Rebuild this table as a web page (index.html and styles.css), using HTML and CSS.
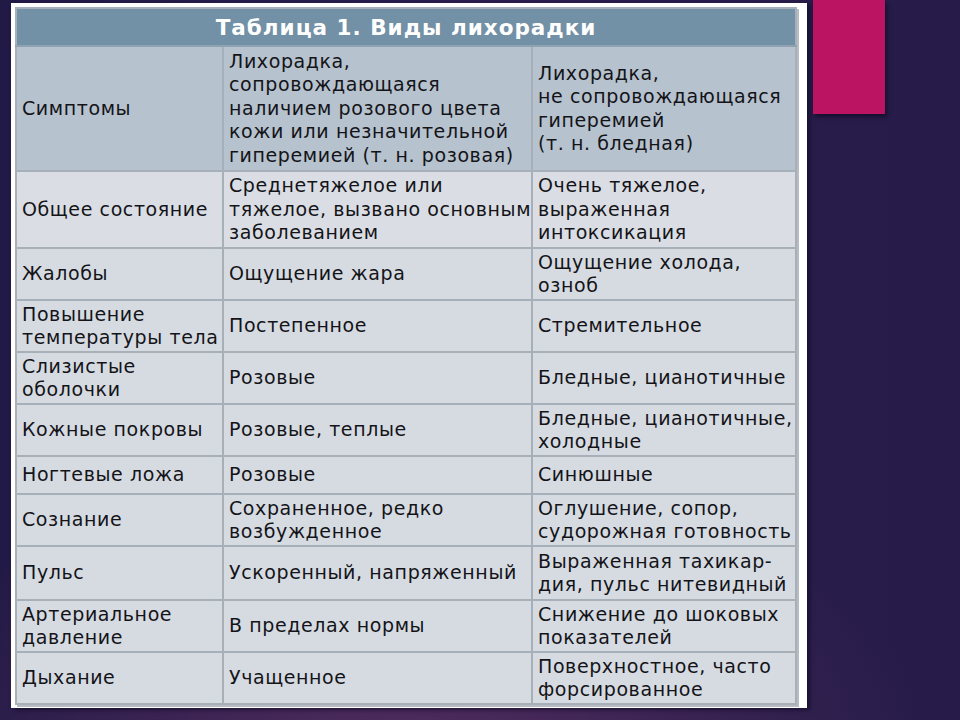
FILE: index.html
```html
<!DOCTYPE html>
<html lang="ru">
<head>
<meta charset="utf-8">
<title>Виды лихорадки</title>
<link rel="stylesheet" href="styles.css">
</head>
<body>
<div class="slide">
  <div class="accent"></div>
  <div class="frame">
    <table class="fever">
      <colgroup>
        <col class="c1"><col class="c2"><col class="c3">
      </colgroup>
      <thead>
        <tr class="title-row"><th colspan="3">Таблица 1. Виды лихорадки</th></tr>
      </thead>
      <tbody>
        <tr class="head r-head">
          <td>Симптомы</td>
          <td>Лихорадка,<br>сопровождающаяся<br>наличием розового цвета<br>кожи или незначительной<br>гиперемией (т. н. розовая)</td>
          <td>Лихорадка,<br>не сопровождающаяся<br>гиперемией<br>(т. н. бледная)</td>
        </tr>
        <tr class="r-general">
          <td>Общее состояние</td>
          <td>Среднетяжелое или<br>тяжелое, вызвано основным<br>заболеванием</td>
          <td>Очень тяжелое,<br>выраженная<br>интоксикация</td>
        </tr>
        <tr class="r-52">
          <td>Жалобы</td>
          <td>Ощущение жара</td>
          <td>Ощущение холода,<br>озноб</td>
        </tr>
        <tr class="r-52">
          <td>Повышение<br>температуры тела</td>
          <td>Постепенное</td>
          <td>Стремительное</td>
        </tr>
        <tr class="r-52">
          <td>Слизистые<br>оболочки</td>
          <td>Розовые</td>
          <td>Бледные, цианотичные</td>
        </tr>
        <tr class="r-52">
          <td>Кожные покровы</td>
          <td>Розовые, теплые</td>
          <td>Бледные, цианотичные,<br>холодные</td>
        </tr>
        <tr class="r-38">
          <td>Ногтевые ложа</td>
          <td>Розовые</td>
          <td>Синюшные</td>
        </tr>
        <tr class="r-52">
          <td>Сознание</td>
          <td>Сохраненное, редко<br>возбужденное</td>
          <td>Оглушение, сопор,<br>судорожная готовность</td>
        </tr>
        <tr class="r-54">
          <td>Пульс</td>
          <td>Ускоренный, напряженный</td>
          <td>Выраженная тахикар-<br>дия, пульс нитевидный</td>
        </tr>
        <tr class="r-52">
          <td>Артериальное<br>давление</td>
          <td>В пределах нормы</td>
          <td>Снижение до шоковых<br>показателей</td>
        </tr>
        <tr class="r-52">
          <td>Дыхание</td>
          <td>Учащенное</td>
          <td>Поверхностное, часто<br>форсированное</td>
        </tr>
      </tbody>
    </table>
  </div>
</div>
</body>
</html>
```
FILE: styles.css
```css
html, body {
  margin: 0;
  padding: 0;
}
body {
  width: 960px;
  height: 720px;
  overflow: hidden;
  background: #251b48;
}
.slide {
  position: relative;
  width: 960px;
  height: 720px;
  background:
    radial-gradient(ellipse 520px 300px at 42% 105%, rgba(92, 48, 100, 0.75), rgba(92, 48, 100, 0) 100%),
    linear-gradient(90deg, #221a46 0%, #2a1e4c 50%, #271c49 100%);
  padding: 3px 0 0 11px;
  box-sizing: border-box;
}
.accent {
  position: absolute;
  left: 813px;
  top: 0;
  width: 72px;
  height: 114px;
  background: #bb1463;
  box-shadow: 2px 3px 4px rgba(10, 5, 30, 0.6);
}
.frame {
  width: 784px;
  height: 697px;
  background: #ffffff;
  padding: 4px 8px 4px 4px;
  box-shadow: 3px 2px 4px rgba(10, 5, 30, 0.55);
}
.fever {
  border-collapse: collapse;
  table-layout: fixed;
  width: 780px;
  font-family: "DejaVu Sans", "Liberation Sans", sans-serif;
  font-size: 19px;
  letter-spacing: 0.6px;
  color: #141418;
  box-shadow: 2px 2px 0 #b8bcc2;
}
.c1 { width: 207px; }
.c2 { width: 309px; }
.c3 { width: 264px; }
.title-row th {
  height: 36px;
  padding: 0;
  background: #7290a6;
  color: #ffffff;
  font-weight: bold;
  font-size: 21.5px;
  letter-spacing: 1px;
  text-align: center;
  border: 2px solid #a6b0ba;
  border-bottom: 2px solid #8ea2b2;
}
.fever td {
  padding: 0 3px 0 5px;
  vertical-align: middle;
  white-space: nowrap;
  line-height: 23.5px;
  background: #d6dbe2;
  border: 2px solid #a7afb8;
  overflow: hidden;
}
.fever tr.head td {
  background: #b6c2ce;
}
.r-head { height: 125px; }
.r-general { height: 77px; }
.r-52 { height: 52px; }
.r-38 { height: 38px; }
.r-54 { height: 54px; }
.r-general td { background: #dadee4; }
```
